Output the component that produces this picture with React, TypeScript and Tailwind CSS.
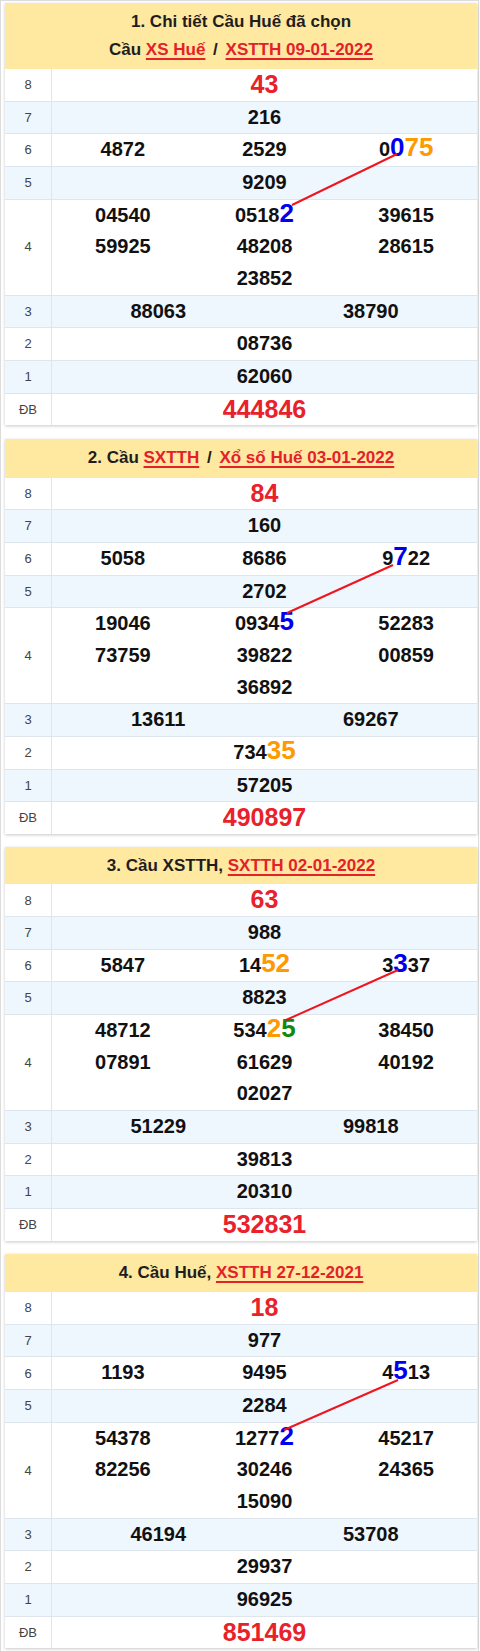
import { Fragment, type ReactNode } from 'react'

type CardData = {
  header: ReactNode
  headerH: string
  g8: string
  g7: string
  g6: string[]
  g5: string
  g4: string[]
  g3: string[]
  g2: string
  g1: string
  db: string
  line: [number, number, number, number]
}

const tone: Record<string, string> = {
  b: 'text-[#0000f0]',
  o: 'text-[#ff9900]',
  g: 'text-[#0f8a10]',
}

function Link({ children }: { children: ReactNode }) {
  return (
    <a className="text-[#e4202a] underline decoration-[1.5px] underline-offset-[3px]">
      {children}
    </a>
  )
}

const Slash = () => <span className="mx-[3px]"> / </span>

const cards: CardData[] = [
  {
    header: (
      <>
        <div>1. Chi tiết Cầu Huế đã chọn</div>
        <div>
          Cầu <Link>XS Huế</Link>
          <Slash />
          <Link>XSTTH 09-01-2022</Link>
        </div>
      </>
    ),
    headerH: 'h-[66px]',
    g8: '43',
    g7: '216',
    g6: ['4872', '2529', '0{b:0}{o:75}'],
    g5: '9209',
    g4: ['04540', '0518{b:2}', '39615', '59925', '48208', '28615', '23852'],
    g3: ['88063', '38790'],
    g2: '08736',
    g1: '62060',
    db: '444846',
    line: [392, 85, 287, 136],
  },
  {
    header: (
      <div>
        2. Cầu <Link>SXTTH</Link>
        <Slash />
        <Link>Xổ số Huế 03-01-2022</Link>
      </div>
    ),
    headerH: 'h-[39px]',
    g8: '84',
    g7: '160',
    g6: ['5058', '8686', '9{b:7}22'],
    g5: '2702',
    g4: ['19046', '0934{b:5}', '52283', '73759', '39822', '00859', '36892'],
    g3: ['13611', '69267'],
    g2: '734{o:35}',
    g1: '57205',
    db: '490897',
    line: [388, 87, 282, 135],
  },
  {
    header: (
      <div>
        3. Cầu XSTTH, <Link>SXTTH 02-01-2022</Link>
      </div>
    ),
    headerH: 'h-[37px]',
    g8: '63',
    g7: '988',
    g6: ['5847', '14{o:52}', '3{b:3}37'],
    g5: '8823',
    g4: ['48712', '534{o:2}{g:5}', '38450', '07891', '61629', '40192', '02027'],
    g3: ['51229', '99818'],
    g2: '39813',
    g1: '20310',
    db: '532831',
    line: [393, 86, 281, 136],
  },
  {
    header: (
      <div>
        4. Cầu Huế, <Link>XSTTH 27-12-2021</Link>
      </div>
    ),
    headerH: 'h-[38px]',
    g8: '18',
    g7: '977',
    g6: ['1193', '9495', '4{b:5}13'],
    g5: '2284',
    g4: ['54378', '1277{b:2}', '45217', '82256', '30246', '24365', '15090'],
    g3: ['46194', '53708'],
    g2: '29937',
    g1: '96925',
    db: '851469',
    line: [393, 88, 279, 138],
  },
]

function Num({ v }: { v: string }) {
  const parts = v.split(/(\{[bog]:\d+\})/).filter(Boolean)
  return (
    <span>
      {parts.map((p, i) => {
        const m = p.match(/^\{([bog]):(\d+)\}$/)
        if (!m) return <Fragment key={i}>{p}</Fragment>
        return (
          <span key={i} className={`text-[26px] leading-none ${tone[m[1]]}`}>
            {m[2]}
          </span>
        )
      })}
    </span>
  )
}

function Row({
  label,
  alt,
  last,
  big,
  children,
}: {
  label: string
  alt?: boolean
  last?: boolean
  big?: boolean
  children: ReactNode
}) {
  return (
    <div
      className={`flex ${last ? '' : 'border-b'} border-[#dfe5ec] ${
        alt ? 'bg-[#eef6fe]' : 'bg-white'
      }`}
    >
      <div className="w-[47px] shrink-0 flex items-center justify-center border-r border-[#dfe5ec] text-[13px] text-[#444]">
        {label}
      </div>
      <div
        className={`flex-1 text-center font-bold leading-[31.65px] ${
          big ? 'text-[25px] text-[#e8212b]' : 'text-[20px] text-[#111]'
        }`}
      >
        {children}
      </div>
    </div>
  )
}

function Card({ c }: { c: CardData }) {
  const [x1, y1, x2, y2] = c.line
  return (
    <div className="bg-white shadow-[0_1px_3px_rgba(0,0,0,0.22)]">
      <div
        className={`${c.headerH} flex flex-col justify-center bg-[#ffe8a0] text-center font-bold text-[17px] leading-[28px] text-[#1e1e1e]`}
      >
        {c.header}
      </div>
      <div className="relative">
        <Row label="8" big>
          {c.g8}
        </Row>
        <Row label="7" alt>
          <Num v={c.g7} />
        </Row>
        <Row label="6">
          <div className="grid grid-cols-3">
            {c.g6.map((v) => (
              <Num key={v} v={v} />
            ))}
          </div>
        </Row>
        <Row label="5" alt>
          <Num v={c.g5} />
        </Row>
        <Row label="4">
          <div className="grid grid-cols-3">
            {c.g4.map((v, i) => (
              <div key={v} className={i === 6 ? 'col-start-2' : ''}>
                <Num v={v} />
              </div>
            ))}
          </div>
        </Row>
        <Row label="3" alt>
          <div className="grid grid-cols-2">
            {c.g3.map((v) => (
              <Num key={v} v={v} />
            ))}
          </div>
        </Row>
        <Row label="2">
          <Num v={c.g2} />
        </Row>
        <Row label="1" alt>
          <Num v={c.g1} />
        </Row>
        <Row label="ĐB" last big>
          {c.db}
        </Row>
        <svg className="absolute inset-0 w-full h-full pointer-events-none">
          <line x1={x1} y1={y1} x2={x2} y2={y2} stroke="#f0141e" strokeWidth={2} />
        </svg>
      </div>
    </div>
  )
}

export default function App() {
  return (
    <div className="w-[479px] border-x border-t border-[#dcdcdc] bg-white pt-[2px] pb-[3px] pl-1 pr-px font-['Liberation_Sans',Arial,sans-serif]">
      <div className="flex flex-col gap-[13.5px]">
        {cards.map((c, i) => (
          <Card key={i} c={c} />
        ))}
      </div>
    </div>
  )
}
